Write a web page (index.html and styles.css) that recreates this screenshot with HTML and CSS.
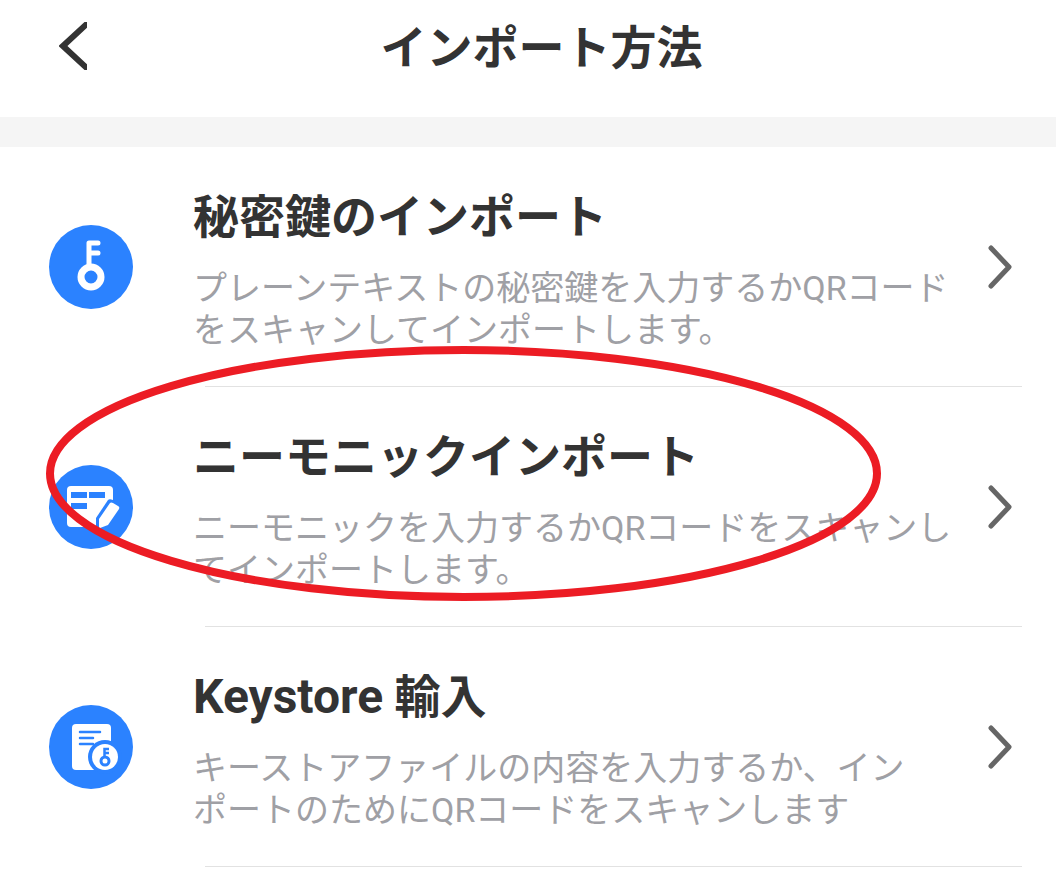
FILE: index.html
```html
<!DOCTYPE html>
<html lang="ja">
<head>
    <meta charset="UTF-8" />
    <meta name="viewport" content="width=device-width, initial-scale=1" />
    <title>インポート方法</title>
    <link rel="stylesheet" href="styles.css">
</head>
<body>
<header class="header">
    <button class="back" type="button" aria-label="戻る">
        <svg width="28" height="48" viewBox="0 0 28 48"><path d="M31 -1 4 24 31 49" /></svg>
    </button>
    <h1 class="header-title">インポート方法</h1>
</header>

<main class="methods">
    <a class="method" href="#private-key">
        <svg class="icon" viewBox="0 0 84 84">
            <circle cx="42" cy="42" r="42" fill="#2b82ff" />
            <circle cx="42" cy="52" r="10" fill="none" stroke="#fff" stroke-width="7" />
            <path d="M40 42V18H49M40 28H49" fill="none" stroke="#fff" stroke-width="5" stroke-linecap="round" stroke-linejoin="round" />
        </svg>
        <div class="text">
            <h2 class="title">秘密鍵のインポート</h2>
            <p class="desc">プレーンテキストの秘密鍵を入力するかQRコードをスキャンしてインポートします。</p>
        </div>
        <svg class="arrow" viewBox="0 0 24 44"><path d="M3 3 21 22 3 41" /></svg>
    </a>

    <a class="method" href="#mnemonic">
        <svg class="icon" viewBox="0 0 84 84">
            <circle cx="42" cy="42" r="42" fill="#2b82ff" />
            <rect x="18" y="21" width="46" height="41" rx="4" fill="#fff" />
            <path d="M22 27H38V33H22ZM40 27H56V33H40ZM22 38H38V44H22Z" fill="#2b82ff" />
            <!-- gap around the pencil -->
            <path d="M47 64V53L59 35Q61 33 66 36L72 40V64Z" fill="#2b82ff" />
            <path d="M61 38Q62 37 64 38L69 41Q71 42 70 44L59 60 51 63Q50 63 50 62V54Z" fill="#fff" />
        </svg>
        <div class="text">
            <h2 class="title">ニーモニックインポート</h2>
            <p class="desc">ニーモニックを入力するかQRコードをスキャンしてインポートします。</p>
        </div>
        <svg class="arrow" viewBox="0 0 24 44"><path d="M3 3 21 22 3 41" /></svg>
        <!-- red ring around this method -->
        <div class="marker">
            <svg><ellipse cx="50%" cy="50%" rx="50%" ry="50%" /></svg>
        </div>
    </a>

    <a class="method" href="#keystore">
        <svg class="icon" viewBox="0 0 84 84">
            <circle cx="42" cy="42" r="42" fill="#2b82ff" />
            <rect x="23" y="19" width="39" height="46" rx="4" fill="#fff" />
            <path d="M31 27H51M31 33H44M31 39H44" fill="none" stroke="#2b82ff" stroke-width="2.500" stroke-linecap="round" />
            <circle cx="56" cy="52" r="17" fill="#2b82ff" />
            <circle cx="56" cy="52" r="13" fill="#fff" />
            <circle cx="56" cy="56" r="4" fill="none" stroke="#2b82ff" stroke-width="3" />
            <path d="M55.500 53V44H60M55.500 48H60" fill="none" stroke="#2b82ff" stroke-width="2.500" />
        </svg>
        <div class="text">
            <h2 class="title"><span class="latin">Keystore</span> 輸入</h2>
            <p class="desc">キーストアファイルの内容を入力するか、イン<br>ポートのためにQRコードをスキャンします</p>
        </div>
        <svg class="arrow" viewBox="0 0 24 44"><path d="M3 3 21 22 3 41" /></svg>
    </a>
</main>
</body>
</html>
```
FILE: styles.css
```css
* {
    box-sizing: border-box;
}

body {
    margin: 0;
    background: #fff;
    color: #333;
    font-family: Roboto, 'Noto Sans CJK JP', sans-serif;
}

h1,
h2,
p {
    margin: 0;
}

/* Header */
.header {
    display: grid;
    grid-template-columns: 32px 1fr 32px;
    align-items: center;
    height: 147px;
    padding: 0 32px 26px 59px;
    border-bottom: 30px solid #f5f5f5;
}

.back {
    display: block;
    padding: 0;
    border: none;
    background: none;
    cursor: pointer;
}

.back svg {
    display: block;
    fill: none;
    stroke: #333;
    stroke-width: 6;
}

.header-title {
    padding-top: 4px;
    font-size: 46px;
    line-height: 60px;
    font-weight: 700;
    text-align: center;
}

/* Method list */
.method {
    display: flex;
    align-items: center;
    position: relative;
    height: 240px;
    padding: 0 44px 0 49px;
    color: inherit;
    text-decoration: none;
}

.method::after {
    content: '';
    position: absolute;
    left: 205px;
    right: 34px;
    bottom: 0;
    height: 1px;
    background: #e2e2e2;
}

.icon {
    flex: none;
    width: 84px;
    height: 84px;
    margin-right: 60px;
}

.text {
    flex: 1;
    margin-right: 24px;
    padding-top: 4px;
}

.title {
    margin-bottom: 20px;
    font-size: 46px;
    line-height: 60px;
    font-weight: 700;
}

.latin {
    font-size: 48px;
}

.desc {
    color: #9fa0a5;
    font-size: 34px;
    line-height: 42px;
    font-weight: 400;
}

.arrow {
    flex: none;
    width: 24px;
    height: 44px;
    fill: none;
    stroke: #666;
    stroke-width: 5;
    stroke-linecap: round;
    stroke-linejoin: round;
}

.marker {
    position: absolute;
    z-index: 1;
    top: -37px;
    left: 50px;
    right: 179px;
    height: 247px;
    pointer-events: none;
}

.marker svg {
    display: block;
    width: 100%;
    height: 100%;
    overflow: visible;
    fill: none;
    stroke: #ec1c24;
    stroke-width: 8;
}
```
